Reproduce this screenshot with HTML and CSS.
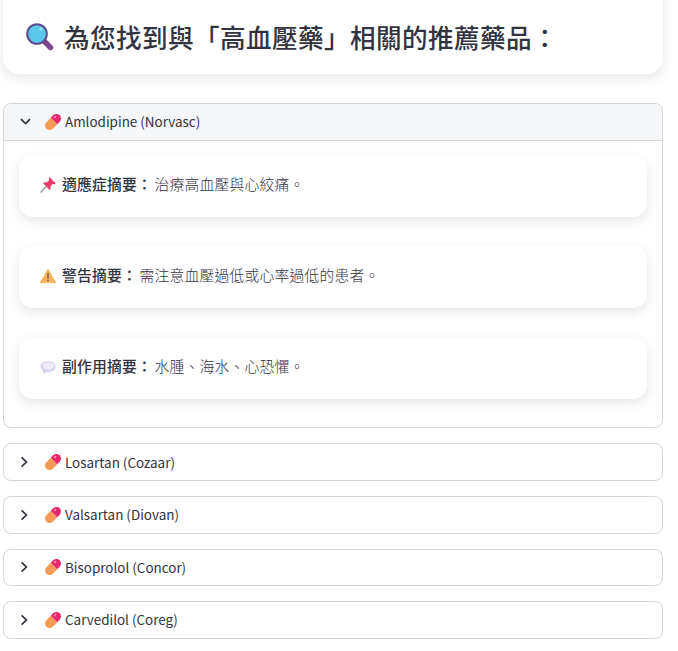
FILE: index.html
```html
<!DOCTYPE html>
<html lang="zh-Hant">
<head>
    <meta charset="UTF-8">
    <meta name="viewport" content="width=device-width, initial-scale=1.0">
    <title>高血壓藥 推薦藥品</title>
    <link rel="stylesheet" href="styles.css">
</head>
<body>
    <!-- Shared icons -->
    <svg class="icon-defs" aria-hidden="true">
        <symbol id="pill" viewBox="0 0 16 16">
            <g transform="rotate(-45 8 8)">
                <path d="M9.4 3.4 L3.2 3.4 A4.6 4.6 0 0 0 3.2 12.6 L9.4 12.6 Z" fill="#f79a55"/>
                <path d="M9.4 3.4 L12.8 3.4 A4.6 4.6 0 0 1 12.8 12.6 L9.4 12.6 Z" fill="#e8266b"/>
                <ellipse cx="13" cy="6" rx="1.4" ry="1" fill="#f78bb0"/>
            </g>
        </symbol>
        <symbol id="chevron-down" viewBox="0 0 11 7">
            <path d="M1 1.2 L5.5 5.6 L10 1.2" fill="none" stroke="#31333f" stroke-width="1.7"/>
        </symbol>
        <symbol id="chevron-right" viewBox="0 0 8 12">
            <path d="M1.6 1.4 L6.4 6 L1.6 10.6" fill="none" stroke="#31333f" stroke-width="1.7"/>
        </symbol>
    </svg>

    <header class="hero-card">
        <svg class="hero-icon" viewBox="0 0 28 28" aria-hidden="true">
            <path d="M18.5 18.5 L24.5 24.5" stroke="#7d4a8e" stroke-width="5.4" stroke-linecap="round"/>
            <circle cx="11" cy="11" r="9.8" fill="#5ac8ea" stroke="#5f4a8f" stroke-width="2"/>
            <circle cx="15" cy="6" r="1.6" fill="#a9e4f5"/>
        </svg>
        <h1 class="hero-title">為您找到與「高血壓藥」相關的推薦藥品：</h1>
    </header>

    <main class="drug-list">
        <section class="expander">
            <div class="expander-head is-open">
                <svg class="chevron-down"><use href="#chevron-down"/></svg>
                <svg class="pill-icon"><use href="#pill"/></svg>
                <span class="drug-name">Amlodipine (Norvasc)</span>
            </div>
            <div class="expander-body">
                <div class="info-card">
                    <svg class="info-icon" viewBox="0 0 16 16" aria-hidden="true">
                        <path d="M0.6 15.4 L6 9.6" stroke="#9a9aa6" stroke-width="1.5"/>
                        <path d="M9.6 0.2 L15.8 6.4 L14.2 7.4 L12.8 6.8 L10.4 9.4 C11 11 10.6 12.2 9.8 13 L3 6.2 C3.8 5.4 5.2 5 6.6 5.6 L9.2 3.2 L8.6 1.8 Z" fill="#ea3a6a"/>
                    </svg>
                    <p class="info-text"><strong>適應症摘要：</strong> 治療高血壓與心絞痛。</p>
                </div>
                <div class="info-card">
                    <svg class="info-icon" viewBox="0 0 16 16" aria-hidden="true">
                        <path d="M8 1.4 L15.6 14.6 L0.4 14.6 Z" fill="#fdb35c" stroke="#fdb35c" stroke-linejoin="round"/>
                        <path d="M8 5 L8 10.6" stroke="#6a5a50" stroke-width="1.5"/>
                        <path d="M8 11.8 L8 13.4" stroke="#6a5a50" stroke-width="1.5"/>
                    </svg>
                    <p class="info-text"><strong>警告摘要：</strong> 需注意血壓過低或心率過低的患者。</p>
                </div>
                <div class="info-card">
                    <svg class="info-icon" viewBox="0 0 16 16" aria-hidden="true">
                        <path d="M3.6 11 L3 14.6 L7.4 12.4 Z" fill="#cfc4ea"/>
                        <ellipse cx="8" cy="7.6" rx="7.6" ry="5.4" fill="#d9cff0"/>
                        <ellipse cx="8.6" cy="7" rx="5.6" ry="3.8" fill="#f1ecfa"/>
                    </svg>
                    <p class="info-text"><strong>副作用摘要：</strong> 水腫、海水、心恐懼。</p>
                </div>
            </div>
        </section>

        <section class="expander">
            <div class="expander-head">
                <svg class="chevron-right"><use href="#chevron-right"/></svg>
                <svg class="pill-icon"><use href="#pill"/></svg>
                <span class="drug-name">Losartan (Cozaar)</span>
            </div>
        </section>
        <section class="expander">
            <div class="expander-head">
                <svg class="chevron-right"><use href="#chevron-right"/></svg>
                <svg class="pill-icon"><use href="#pill"/></svg>
                <span class="drug-name">Valsartan (Diovan)</span>
            </div>
        </section>
        <section class="expander">
            <div class="expander-head">
                <svg class="chevron-right"><use href="#chevron-right"/></svg>
                <svg class="pill-icon"><use href="#pill"/></svg>
                <span class="drug-name">Bisoprolol (Concor)</span>
            </div>
        </section>
        <section class="expander">
            <div class="expander-head">
                <svg class="chevron-right"><use href="#chevron-right"/></svg>
                <svg class="pill-icon"><use href="#pill"/></svg>
                <span class="drug-name">Carvedilol (Coreg)</span>
            </div>
        </section>
    </main>
</body>
</html>
```

FILE: styles.css
```css
/* Page */
body {
    margin: 0;
    padding: 0 15px 0 3px;
    background: #fff;
    color: #31333f;
    font-family: "Noto Sans CJK TC", "Noto Sans", sans-serif;
    overflow: hidden;
}

.icon-defs {
    position: absolute;
    width: 0;
    height: 0;
}

/* Heading card, its top runs off the page */
.hero-card {
    display: flex;
    align-items: center;
    height: 94px;
    margin-top: -20px;
    padding: 20px 23px 0;
    box-sizing: border-box;
    background: #fff;
    border-radius: 16px;
    box-shadow: 0 4px 12px rgba(0, 0, 0, 0.1);
}

.hero-icon {
    width: 28px;
    height: 28px;
    margin-right: 10px;
    flex: none;
}

.hero-title {
    margin: 0;
    font-size: 25.6px;
    font-weight: 500;
    line-height: 36px;
    letter-spacing: 0.4px;
    white-space: nowrap;
}

/* Expanders */
.drug-list {
    display: flex;
    flex-direction: column;
    gap: 15px;
    margin-top: 29px;
}

.expander {
    border: 1px solid #d5d6da;
    border-radius: 8px;
    overflow: hidden;
}

.expander-head {
    display: flex;
    align-items: center;
    height: 35.6px;
    padding-left: 16px;
}

.expander-head.is-open {
    background: #f6f7f9;
    border-bottom: 1px solid #d5d6da;
}

.chevron-down {
    width: 11px;
    height: 7px;
    margin-right: 14px;
    flex: none;
}

.chevron-right {
    width: 8px;
    height: 12px;
    margin-right: 17px;
    flex: none;
}

.pill-icon {
    width: 16px;
    height: 16px;
    margin-right: 4px;
    flex: none;
}

.drug-name {
    margin-bottom: 1px;
    font-size: 13.45px;
    line-height: 20px;
}

.expander-body {
    display: flex;
    flex-direction: column;
    gap: 29.5px;
    padding: 14.5px 15px 28.8px;
}

/* Summary cards */
.info-card {
    display: flex;
    align-items: center;
    height: 61.5px;
    padding: 0 21px;
    background: #fff;
    border-radius: 14px;
    box-shadow: 0 4px 12px rgba(0, 0, 0, 0.1);
}

.info-icon {
    width: 16px;
    height: 16px;
    margin: 0 6px 1px 0;
    flex: none;
}

.info-text {
    margin: 0 0 3px;
    font-size: 14.8px;
    font-weight: 300;
    letter-spacing: 0.2px;
    word-spacing: -1px;
    line-height: 22px;
    white-space: nowrap;
}

.info-text strong {
    font-weight: 500;
}
```
